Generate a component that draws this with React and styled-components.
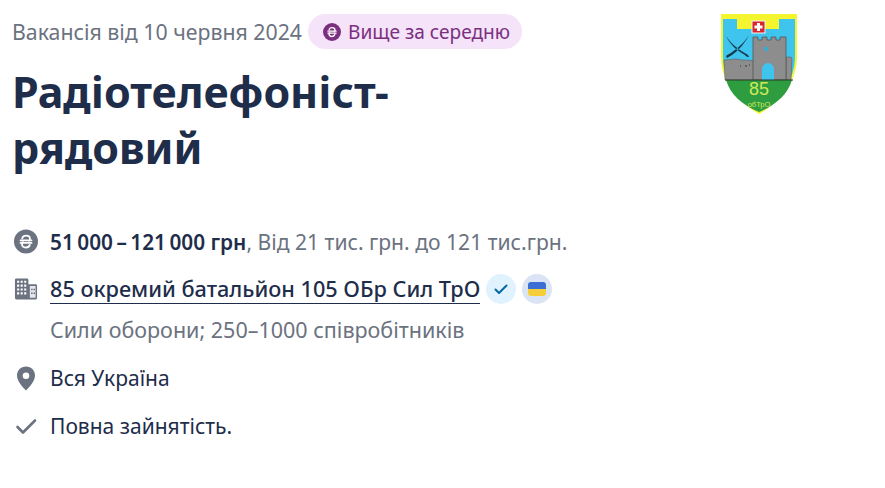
import React from 'react';
import styled, { createGlobalStyle } from 'styled-components';

const Global = createGlobalStyle`
body {
  margin: 0;
  background: #fff;
  font-family: "Noto Sans", "Open Sans", sans-serif;
}
`

const Page = styled.div`
width: 885px;
height: 488px;
display: flex;
justify-content: space-between;
padding: 14px 0 0 12px;
box-sizing: border-box;
overflow: hidden;
`

const Main = styled.div`
width: 600px;
`

const Meta = styled.div`
display: flex;
align-items: center;
gap: 6px;
height: 35px;
font-size: 21.3px;
color: #6b7280;
`

const Badge = styled.span`
display: flex;
align-items: center;
gap: 7px;
height: 35px;
padding: 0 12px 0 15px;
border-radius: 18px;
background: #f4e3f9;
color: #7b2f7f;
font-size: 19.1px;
`

const Title = styled.h1`
margin: 15px 0 0;
width: 420px;
font-size: 43px;
line-height: 56px;
font-weight: 700;
color: #1e2d4a;
`

const List = styled.div`
margin-top: 41px;
`

const Row = styled.div`
display: flex;
align-items: center;
gap: 12px;
height: 48px;
padding-left: 2px;
font-size: 21px;
color: #1e2d4a;
`

const IconBox = styled.span`
display: flex;
justify-content: center;
align-items: center;
width: 24px;
height: 24px;
flex: none;
`

const Salary = styled.b`
font-weight: 600;
font-size: 20.8px;
`

const Muted = styled.span`
color: #6b7280;
font-size: 21.1px;
`

const Company = styled.span`
font-weight: 500;
font-size: 21.7px;
border-bottom: 1px solid #1e2d4a;
line-height: 29px;
`

const Round = styled.span`
display: flex;
justify-content: center;
align-items: center;
width: 30px;
height: 30px;
border-radius: 50%;
margin-left: -6px;
background: ${p => p.$bg};
`

const Sub = styled.div`
height: 34px;
margin-bottom: 7px;
padding-left: 38px;
font-size: 21.5px;
line-height: 34px;
color: #6b7280;
`

const Logo = styled.svg`
width: 78px;
height: 102px;
margin: -1px 87px 0 0;
flex: none;
`

function HryvniaIcon({ size, color }) {
  return (
    <svg width={size} height={size} viewBox="0 0 24 24">
      <circle cx="12" cy="12" r="12" fill={color} />
      <path d="M8.200 8.800C8.800 7 10.300 6.200 12 6.200c2.400 0 4 1.400 4 3.200 0 .8-.4 1.500-1 2M9 12.800c-.6.5-1 1.200-1 2 0 1.800 1.600 3.200 4 3.200 1.700 0 3.200-.8 3.800-2.600M6.500 10.800h11M6.500 13.400h11" fill="none" stroke="#fff" strokeWidth="1.800" strokeLinecap="round" />
    </svg>
  );
}

function BuildingIcon() {
  return (
    <svg width="25" height="24" viewBox="0 0 25 24">
      <path d="M1 2.500A1.500 1.500 0 0 1 2.500 1h11A1.500 1.500 0 0 1 15 2.500V7h7.500A1.500 1.500 0 0 1 24 8.500v13a1.500 1.500 0 0 1-1.500 1.500h-20A1.500 1.500 0 0 1 1 21.500z" fill="#6b7280" />
      <path d="M16.500 9h5.500a.5.5 0 0 1 .5.5v11.500h-6z" fill="#e4e6ea" />
      <path d="M3.200 4.500h2.200M6.900 4.500h2.200M10.600 4.500h2.200M3.200 8.500h2.200M6.900 8.500h2.200M10.600 8.500h2.200M3.200 12.500h2.200M6.900 12.500h2.200M10.600 12.500h2.200M3.200 16.500h2.200M6.900 16.500h2.200M10.600 16.500h2.200" stroke="#fff" strokeWidth="2.200" />
      <path d="M17.800 12.500h1.600M20.300 12.500h1.600M17.800 16.500h1.600M20.300 16.500h1.600" stroke="#6b7280" strokeWidth="1.600" />
    </svg>
  );
}

function PinIcon() {
  return (
    <svg width="20" height="25" viewBox="0 0 20 25">
      <path fillRule="evenodd" d="M10 .5C4.800.5 1 4.400 1 9.500c0 5.500 5.500 11.500 9 15 3.500-3.500 9-9.500 9-15C19 4.400 15.200.5 10 .5zm0 6a3.300 3.300 0 1 1 0 6.600 3.300 3.300 0 0 1 0-6.600z" fill="#6b7280" />
    </svg>
  );
}

function CheckIcon() {
  return (
    <svg width="24" height="24" viewBox="0 0 24 24">
      <path d="M3.500 13l5.500 5.500L21 6.500" fill="none" stroke="#6b7280" strokeWidth="2.600" strokeLinecap="round" strokeLinejoin="round" />
    </svg>
  );
}

function Emblem() {
  return (
    <Logo viewBox="0 0 78 102">
      <path d="M1 1h76v42c0 24-14 44-38 58C15 87 1 67 1 43z" fill="#f4f52e" />
      <path d="M3 6h72v37c0 23-13 42-36 55C16 85 3 66 3 43z" fill="#3fc4ee" />
      <path d="M17 5h42v11H17z" fill="#f4f52e" />
      <rect x="32" y="8" width="13" height="12" fill="#d8262e" stroke="#f2f2f2" />
      <path d="M37 10h3v2.500h2.500v3H40V18h-3v-2.500h-2.500v-3H37z" fill="#fff" />
      <path d="M6 23c5 8 12 13 22 19l1 2c-2 0-3-.5-4-2C16 37 10 31 6 23zM29 22c-4 7-11 13-18 18-2 1-4 2-5 3l1 2 5-3c7-5 13-12 17-20z" fill="#15384a" />
      <path d="M4 47l12-1 6 1 12 .5V67H5z" fill="#8d8d8d" stroke="#555" strokeWidth=".5" />
      <path d="M66 44h5l1 2-1 21h-5z" fill="#8d8d8d" stroke="#555" strokeWidth=".5" />
      <path d="M33 24h5v3h4v-3h5v3h4v-3h5v3h4v-3h6v43H33z" fill="#8d8d8d" stroke="#4f4f4f" strokeWidth=".7" />
      <path d="M42 67V56a6 6 0 0 1 12 0v11z" fill="#3fc4ee" />
      <rect x="44" y="34" width="4" height="4" fill="#3fa7cc" />
      <path d="M20 53h1M25 53h2M29 52h1" stroke="#333" strokeWidth="1" />
      <path d="M6 67h66c-4 14-16 25-33 32C22 92 10 81 6 67z" fill="#2e9d3f" />
      <path d="M5 67h68" stroke="#2c3b2c" strokeWidth="1.200" />
      <text x="39" y="82" textAnchor="middle" fontSize="18" fontFamily="Liberation Sans" fill="#cfe85a">85</text>
      <text x="39" y="94" textAnchor="middle" fontSize="7.500" fontFamily="Liberation Sans" fill="#cfe85a">обТрО</text>
    </Logo>
  );
}

export default function App() {
  return (
    <>
      <Global />
      <Page>
        <Main>
          <Meta>
            Вакансія від 10 червня 2024
            <Badge>
              <HryvniaIcon size={18} color="#7b2f7f" />
              Вище за середню
            </Badge>
          </Meta>
          <Title>Радіотелефоніст-рядовий</Title>
          <List>
            <Row>
              <IconBox><HryvniaIcon size={25} color="#6b7280" /></IconBox>
              <span><Salary>51{'\u2009'}000{'\u2009'}–{'\u2009'}121{'\u2009'}000 грн</Salary><Muted>, Від 21 тис. грн. до 121 тис.грн.</Muted></span>
            </Row>
            <Row>
              <IconBox><BuildingIcon /></IconBox>
              <Company>85 окремий батальйон 105 ОБр Сил ТрО</Company>
              <Round $bg="#e0f2fe">
                <svg width="16" height="16" viewBox="0 0 16 16">
                  <path d="M2.500 8.500l3.500 3.500 7.500-7.500" fill="none" stroke="#0369a1" strokeWidth="2" strokeLinecap="round" strokeLinejoin="round" />
                </svg>
              </Round>
              <Round $bg="#dbe4f5">
                <svg width="18" height="14" viewBox="0 0 18 14">
                  <path d="M0 7V3a3 3 0 0 1 3-3h12a3 3 0 0 1 3 3v4z" fill="#3b6fd4" />
                  <path d="M0 7h18v4a3 3 0 0 1-3 3H3a3 3 0 0 1-3-3z" fill="#f5cf3a" />
                </svg>
              </Round>
            </Row>
            <Sub>Сили оборони; 250–1000 співробітників</Sub>
            <Row>
              <IconBox><PinIcon /></IconBox>
              Вся Україна
            </Row>
            <Row>
              <IconBox><CheckIcon /></IconBox>
              Повна зайнятість.
            </Row>
          </List>
        </Main>
        <Emblem />
      </Page>
    </>
  );
}
